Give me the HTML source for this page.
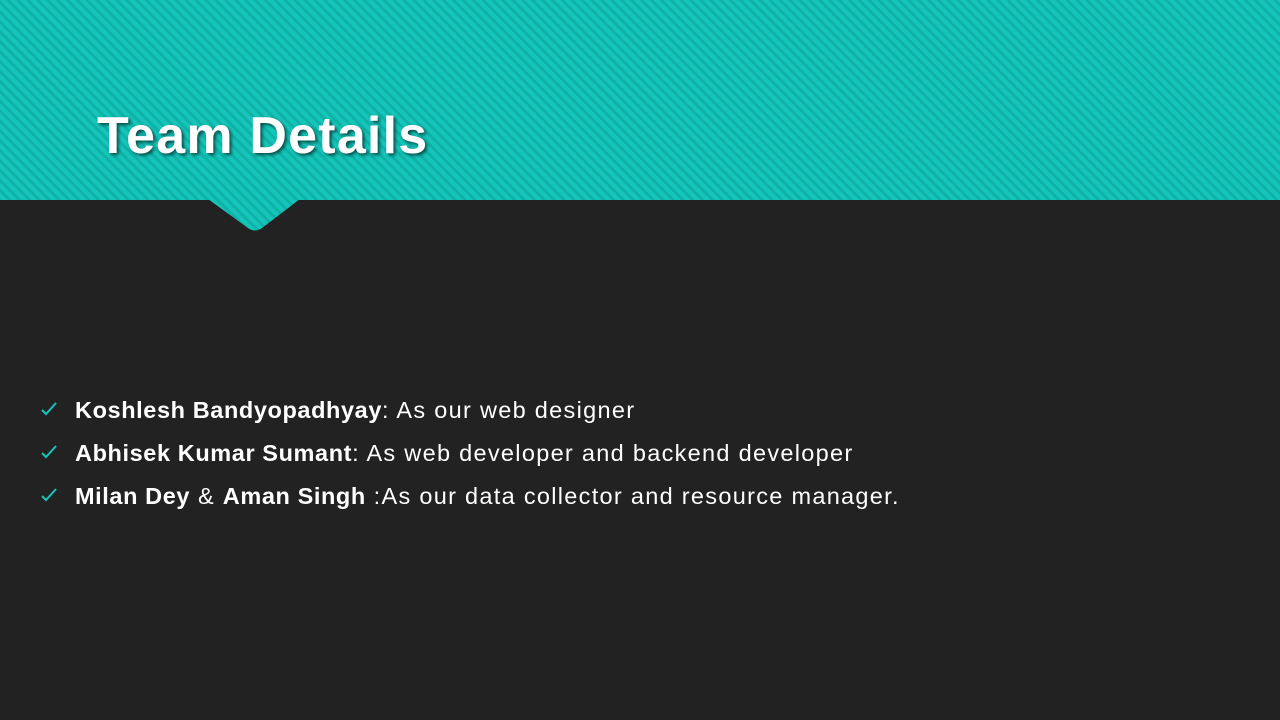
<!DOCTYPE html>
<html><head><style>
html,body{margin:0;padding:0;}
body{width:1280px;height:720px;background:#222222;position:relative;overflow:hidden;font-family:"Liberation Sans",sans-serif;}
.tip{position:absolute;left:0;top:0;width:1280px;height:232px;}
h1{position:absolute;left:97px;top:106px;margin:0;font-size:52px;font-weight:bold;color:#fff;letter-spacing:1.2px;
text-shadow:2px 2px 3px rgba(0,0,0,0.6);}
ul{position:absolute;left:40px;top:395px;margin:0;padding:0;list-style:none;color:#fff;font-size:23.5px;letter-spacing:1.3px;white-space:nowrap;}
li{height:43px;line-height:30px;position:relative;padding-left:35px;}
li .c{position:absolute;left:0;top:6px;}
b{font-weight:bold;letter-spacing:0.6px;}
</style></head><body>
<svg class="tip" viewBox="0 0 1280 232">
<defs><pattern id="p" width="7" height="7" patternUnits="userSpaceOnUse" patternTransform="rotate(-45)">
<rect width="4" height="7" fill="#15c5ba"/><rect x="4" width="3" height="7" fill="#0fb2a7"/></pattern></defs>
<rect width="1280" height="200" fill="url(#p)"/>
<path d="M208 199 L248 228 Q255 233 262 228 L300 199 Z" fill="url(#p)"/>
</svg>
<h1>Team Details</h1>
<ul>
<li><svg class="c" width="18" height="16" viewBox="0 0 18 16"><path d="M2 9 L6 13 L16 2" stroke="#15c5ba" stroke-width="2" fill="none"/></svg><b>Koshlesh Bandyopadhyay</b>: As our web designer</li>
<li><svg class="c" width="18" height="16" viewBox="0 0 18 16"><path d="M2 9 L6 13 L16 2" stroke="#15c5ba" stroke-width="2" fill="none"/></svg><b>Abhisek Kumar Sumant</b>: As web developer and backend developer</li>
<li><svg class="c" width="18" height="16" viewBox="0 0 18 16"><path d="M2 9 L6 13 L16 2" stroke="#15c5ba" stroke-width="2" fill="none"/></svg><b>Milan Dey</b> &amp; <b>Aman Singh</b> :As our data collector and resource manager.</li>
</ul>
</body></html>
